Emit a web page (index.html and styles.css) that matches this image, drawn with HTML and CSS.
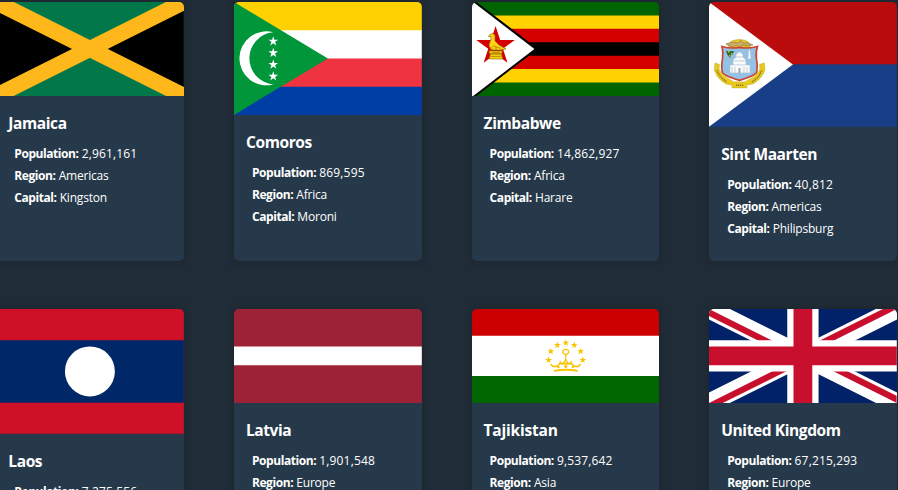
FILE: index.html
```
<!DOCTYPE html>
<html lang="en">
<head>
<meta charset="utf-8">
<title>Countries</title>
<link rel="stylesheet" href="styles.css">
</head>
<body>
<svg class="defs" aria-hidden="true">
  <symbol id="star" viewBox="-10 -10 20 20" overflow="visible"><path d="M0-10 2.25-3.09H9.51L3.63 1.18 5.88 8.09 0 3.82-5.88 8.09-3.63 1.18-9.51-3.09H-2.25Z"/></symbol>
</svg>
<main class="grid">
  <article class="card">
    <svg class="flag" viewBox="0 0 188 94" preserveAspectRatio="none">
      <path fill="#007749" d="M0 0h188v94H0z"/>
      <path fill="#000" d="M0 0 94 47 0 94zM188 0 94 47l94 47z"/>
      <path stroke="#ffb81c" stroke-width="16" d="m-10-5 208 104M198-5-10 99"/>
    </svg>
    <div class="info">
      <h2>Jamaica</h2>
      <ul><li><b>Population:</b> <span class="number">2,961,161</span></li><li><b>Region:</b> <span>Americas</span></li><li><b>Capital:</b> <span>Kingston</span></li></ul>
    </div>
  </article>
  <article class="card">
    <svg class="flag" viewBox="0 0 188 113" preserveAspectRatio="none">
      <path fill="#ffd100" d="M0 0h188v29H0z"/>
      <path fill="#fff" d="M0 28.25h188v29H0z"/>
      <path fill="#ef3340" d="M0 56.5h188v29H0z"/>
      <path fill="#003da5" d="M0 84.75h188V113H0z"/>
      <path fill="#009639" d="m0 0 94 56.5L0 113z"/>
      <path fill="#fff" d="M39.3 30.3A27 27 0 1 0 39.3 82.5A26.2 26.2 0 0 1 39.3 30.3Z"/>
      <g fill="#fff"><use href="#star" x="34.2" y="34.2" width="10.2" height="10.2"/><use href="#star" x="34.2" y="45.9" width="10.2" height="10.2"/><use href="#star" x="34.2" y="57.6" width="10.2" height="10.2"/><use href="#star" x="34.2" y="69.3" width="10.2" height="10.2"/></g>
    </svg>
    <div class="info">
      <h2>Comoros</h2>
      <ul><li><b>Population:</b> <span class="number">869,595</span></li><li><b>Region:</b> <span>Africa</span></li><li><b>Capital:</b> <span>Moroni</span></li></ul>
    </div>
  </article>
  <article class="card">
    <svg class="flag" viewBox="0 0 188 94" preserveAspectRatio="none">
      <path fill="#006400" d="M0 0h188v94H0z"/>
      <path fill="#ffd200" d="M0 13.43h188v67.14H0z"/>
      <path fill="#d40000" d="M0 26.86h188v40.28H0z"/>
      <path fill="#000" d="M0 40.29h188v13.42H0zM0 0h4.500L66 47 4.500 94H0z"/>
      <path fill="#fff" d="M0 0h1.200L62.500 47 1.200 94H0z"/>
      <use href="#star" fill="#d40000" x="3.300" y="24" width="40.600" height="40.600"/>
      <path fill="#fcd116" stroke="#8c6a00" stroke-width=".65" stroke-linejoin="round" d="M16.500 34.500 18 32.500 20.500 31.500 23 33V39L27 43 34 47 29 48H19L17 43 19 37V34.500ZM17 49H30.500L29.500 52H18ZM18.500 52H29.500L30.500 57H17.200Z"/>
      <path fill="none" stroke="#8c6a00" stroke-width=".6" d="M21 44 29 46.500M20 48V45M24 48V45M18.500 54.500H29M20 50.500H28"/>
    </svg>
    <div class="info">
      <h2>Zimbabwe</h2>
      <ul><li><b>Population:</b> <span class="number">14,862,927</span></li><li><b>Region:</b> <span>Africa</span></li><li><b>Capital:</b> <span>Harare</span></li></ul>
    </div>
  </article>
  <article class="card">
    <svg class="flag" viewBox="0 0 188 125" preserveAspectRatio="none">
      <path fill="#ba0c0c" d="M0 0h188v62.500H0z"/>
      <path fill="#173e87" d="M0 62.500h188V125H0z"/>
      <path fill="#fff" d="m0 0 84 62.500L0 125z"/>
      <path fill="#e8c928" stroke="#b39724" stroke-width=".5" d="M19 44Q20 38 30.500 37.500 40 38 42 44L39 46H22Z"/>
      <path fill="#c8ad6c" stroke="#8e7035" stroke-width=".6" d="M17 42Q24 39 29 41L32 38.500 34 41Q39 40 44 43L38 44 33 43 31 46 28 43 23 45Z"/>
      <path fill="#94c2e6" stroke="#cd432f" stroke-width="1.700" d="M13 44.500Q22 47 30.500 45.500 39 47 48.500 44.500 46.500 50 47.500 57 49 65 47.500 71 43 75 30.500 78.500 18 75 13.500 71 12 65 13.500 57 14.500 50 13 44.500Z"/>
      <path fill="#f8fafb" stroke="#aebbc4" stroke-width=".5" d="M21 71V63H24V58L27 55V53Q30.500 47 34 53V55L37 58V63H41V71ZM39 57 39.700 48H41L42 57Z"/>
      <path stroke="#b1bfc8" stroke-width=".7" d="M24 63H37M24 59H37M26 55H35M23 65V71M26 65V71M35 65V71M38 65V71"/>
      <path fill="#9ca7ae" d="M29.500 66h2v5h-2z"/>
      <path fill="#246e38" d="M17 49H25L24 52 22.500 53 21 56 18.500 53Z"/>
      <path fill="#e9b91f" d="M19 49h1.500v1.500H19zM22 51h1.500v1.500H22zM20 53h1.500v1.500H20z"/>
      <path fill="#e8c91d" stroke="#c7a916" stroke-width=".5" d="M6 61 10.500 62.500 10 67Q13 74 20 77L25 80H36L41 77Q48 74 51 67L50.500 62.500 55.500 61 56 68Q53 77 44 82L38 83V86H23V83L17 82Q8 77 5.300 68Z"/>
      <path fill="none" stroke="#807330" stroke-width="1.500" stroke-dasharray="1.200 .8" d="M8 68Q11 76 18 80M27 83.300H34.500M43 80Q50 76 53 68"/>
    </svg>
    <div class="info">
      <h2>Sint Maarten</h2>
      <ul><li><b>Population:</b> <span class="number">40,812</span></li><li><b>Region:</b> <span>Americas</span></li><li><b>Capital:</b> <span>Philipsburg</span></li></ul>
    </div>
  </article>
  <article class="card">
    <svg class="flag" viewBox="0 0 188 125" preserveAspectRatio="none">
      <path fill="#ce1126" d="M0 0h188v125H0z"/><path fill="#002868" d="M0 31.250h188v62.500H0z"/><circle fill="#fff" cx="94" cy="62.500" r="25"/>
    </svg>
    <div class="info">
      <h2>Laos</h2>
      <ul><li><b>Population:</b> <span class="number">7,275,556</span></li><li><b>Region:</b> <span>Asia</span></li><li><b>Capital:</b> <span>Vientiane</span></li></ul>
    </div>
  </article>
  <article class="card">
    <svg class="flag" viewBox="0 0 188 94" preserveAspectRatio="none">
      <path fill="#9d2235" d="M0 0h188v94H0z"/><path fill="#fff" d="M0 37.600h188v18.800H0z"/>
    </svg>
    <div class="info">
      <h2>Latvia</h2>
      <ul><li><b>Population:</b> <span class="number">1,901,548</span></li><li><b>Region:</b> <span>Europe</span></li><li><b>Capital:</b> <span>Riga</span></li></ul>
    </div>
  </article>
  <article class="card">
    <svg class="flag" viewBox="0 0 188 94" preserveAspectRatio="none">
      <path fill="#c00" d="M0 0h188v27H0z"/><path fill="#fff" d="M0 26.860h188v41H0z"/><path fill="#060" d="M0 67.140h188V94H0z"/>
      <g fill="#f8c300"><use href="#star" x="90.200" y="30.200" width="7.400" height="7.400"/><use href="#star" x="81.700" y="32.500" width="7.400" height="7.400"/><use href="#star" x="98.700" y="32.500" width="7.400" height="7.400"/><use href="#star" x="75.200" y="38.700" width="7.400" height="7.400"/><use href="#star" x="105" y="38.700" width="7.400" height="7.400"/><use href="#star" x="72.900" y="47.400" width="7.400" height="7.400"/><use href="#star" x="107.200" y="47.400" width="7.400" height="7.400"/><circle cx="86.500" cy="58" r="1.300"/><circle cx="93.800" cy="57.500" r="1.500"/><circle cx="101" cy="58" r="1.300"/></g>
      <g fill="none" stroke="#f8c300"><path stroke-width="1.200" d="M92.600 45.500 90.700 43.500A3.100 3.100 0 0 1 96.900 43.500L95 45.500ZM93.800 46V50Q93 54 89 55.500M93.800 50Q94.600 54 98.600 55.500"/><path stroke-width="1.600" d="M79 55Q80 58 84 57.500 88 56 88.500 53.500 90 56 93.800 54.500 97.500 56 99 53.500 99.500 56 104 57.500 107.500 58 108.700 55"/><path stroke-width="1.900" d="M82 62Q93.800 59.500 105.700 62"/></g>
    </svg>
    <div class="info">
      <h2 class="wide">Tajikistan</h2>
      <ul><li><b>Population:</b> <span class="number">9,537,642</span></li><li><b>Region:</b> <span>Asia</span></li><li><b>Capital:</b> <span>Dushanbe</span></li></ul>
    </div>
  </article>
  <article class="card">
    <svg class="flag" viewBox="0 0 60 30" preserveAspectRatio="none">
      <clipPath id="saltire"><path d="M30 15h30v15zv15H0zH0V0zV0h30z"/></clipPath>
      <path fill="#012169" d="M0 0h60v30H0z"/>
      <path stroke="#fff" stroke-width="6" d="m0 0 60 30M60 0 0 30"/>
      <path clip-path="url(#saltire)" stroke="#c8102e" stroke-width="4" d="m0 0 60 30M60 0 0 30"/>
      <path stroke="#fff" stroke-width="10" d="M30 0v30M0 15h60"/>
      <path stroke="#c8102e" stroke-width="6" d="M30 0v30M0 15h60"/>
    </svg>
    <div class="info">
      <h2>United Kingdom</h2>
      <ul><li><b>Population:</b> <span class="number">67,215,293</span></li><li><b>Region:</b> <span>Europe</span></li><li><b>Capital:</b> <span>London</span></li></ul>
    </div>
  </article>
</main>
</body>
</html>
```
FILE: styles.css
```
* { box-sizing: border-box; }
body {
  margin: 0;
  height: 490px;
  overflow: hidden;
  background: #202c37;
  color: #fff;
  font-family: "Open Sans", sans-serif;
}
.defs { display: none; }
.grid {
  display: grid;
  grid-template-columns: repeat(4, 187.8px);
  grid-auto-rows: 259px;
  gap: 48px 49.85px;
  margin-left: -3.7px;
  padding-top: 2px;
}
.card {
  overflow: hidden;
  border-radius: 5px;
  background: #26394a;
  box-shadow: 0 0 8px rgba(0, 0, 0, .2);
}
.flag {
  display: block;
  width: 100%;
}
.info { padding: 16.1px 12px 0; }
h2 {
  margin: 0;
  font-size: 15.5px;
  line-height: 22px;
  font-weight: 700;
  letter-spacing: -.4px;
}
.wide { letter-spacing: -.2px; }
ul {
  margin: 9.2px 0 0;
  padding: 0 0 0 6px;
  list-style: none;
  font-size: 12px;
  line-height: 22px;
}
li { white-space: nowrap; }
b { font-weight: 700; letter-spacing: -.43px; }
span { letter-spacing: -.2px; }
.number { letter-spacing: .15px; }
```
